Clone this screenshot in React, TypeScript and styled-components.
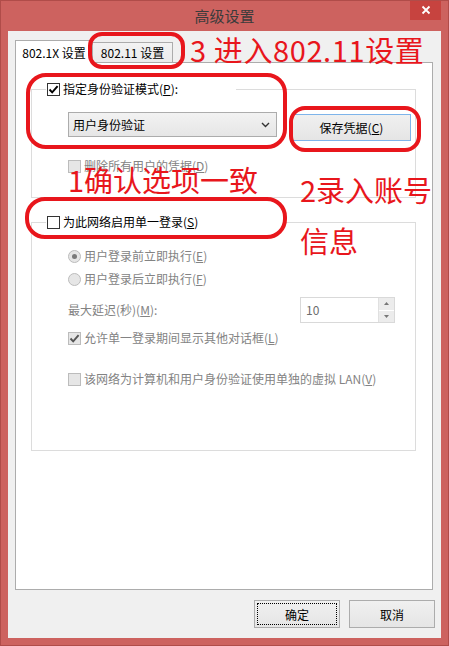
import React from 'react';
import styled, { createGlobalStyle } from 'styled-components';

const FONT = `"Noto Sans CJK SC", "Noto Sans", sans-serif`;

const Global = createGlobalStyle`
  html, body { margin: 0; padding: 0; background: #ffffff; }
  body { font-family: ${FONT}; -webkit-font-smoothing: antialiased; }
  * { box-sizing: border-box; }
`;

const Window = styled.div`
  position: relative;
  width: 449px;
  height: 646px;
  background: #cd625f;
  border: 1px solid #b04c49;
  padding: 0 7px 7px;
  display: flex;
  flex-direction: column;
  overflow: hidden;
`;

const TitleBar = styled.div`
  height: 30px;
  display: grid;
  grid-template-columns: 1fr auto 1fr;
  align-items: start;
`;

const Title = styled.div`
  grid-column: 2;
  font-family: ${FONT};
  font-size: 15px;
  line-height: 15px;
  padding-top: 7px;
  color: #3b3b3b;
`;

const CloseBtn = styled.div`
  grid-column: 3;
  justify-self: end;
  width: 31px;
  height: 20px;
  margin-top: -1px;
  background: #c7433f;
  display: flex;
  align-items: center;
  justify-content: center;
`;

const Client = styled.div`
  flex: 1;
  background: #f0f0f0;
  padding: 9px 7px 0 7px;
  display: flex;
  flex-direction: column;
`;

const TabStrip = styled.div`
  display: flex;
  align-items: flex-end;
  height: 22px;
`;

const Tab = styled.div<{ $active?: boolean; $w: number }>`
  width: ${p => p.$w}px;
  height: ${p => (p.$active ? 23 : 20)}px;
  margin-bottom: ${p => (p.$active ? -1 : 0)}px;
  position: relative;
  z-index: ${p => (p.$active ? 2 : 1)};
  background: ${p => (p.$active ? '#ffffff' : 'linear-gradient(#f3f3f3, #ebebeb)')};
  border: 1px solid #acacac;
  border-bottom: none;
  ${p => (p.$active ? '' : 'border-left: none;')}
  display: flex;
  align-items: center;
  justify-content: center;
  font-family: ${FONT};
  font-size: 12px;
  color: #000;
  white-space: nowrap;
`;

const Panel = styled.div`
  height: 528px;
  margin-right: 1px;
  background: #ffffff;
  border: 1px solid #acacac;
  display: flex;
  flex-direction: column;
`;

const Group = styled.fieldset<{ $mt: number; $pb: number }>`
  margin: ${p => p.$mt}px 16px 0 15px;
  padding: 0 0 ${p => p.$pb}px 14px;
  border: 1px solid #dcdcdc;
  min-width: 0;
`;

const Legend = styled.legend<{ $w: number }>`
  width: ${p => p.$w}px;
  padding: 0 0 0 1px;
  margin: 0;
  height: 16px;
  display: flex;
  align-items: center;
  gap: 3px;
  font-family: ${FONT};
  font-size: 12px;
  line-height: 16px;
  color: #000;
  white-space: nowrap;
`;

const Indent = styled.div`
  padding-left: 22px;
  display: flex;
  flex-direction: column;
`;

const Row = styled.div<{ $mt: number; $pr?: number }>`
  margin-top: ${p => p.$mt}px;
  padding-right: ${p => p.$pr ?? 0}px;
  display: flex;
  align-items: center;
  gap: 3px;
  min-height: 16px;
  font-family: ${FONT};
  font-size: 12px;
  line-height: 16px;
  white-space: nowrap;
`;

const TopRow = styled.div`
  margin-top: 15px;
  display: flex;
  align-items: flex-start;
`;

const Label = styled.span<{ $disabled?: boolean }>`
  color: ${p => (p.$disabled ? '#838383' : '#000')};
  font-family: ${FONT};
  font-size: 12px;
`;

const Box = styled.span<{ $disabled?: boolean }>`
  width: 13px;
  height: 13px;
  flex: none;
  border: 1px solid ${p => (p.$disabled ? '#bcbcbc' : '#333333')};
  background: ${p => (p.$disabled ? '#e6e6e6' : '#ffffff')};
  display: flex;
  align-items: center;
  justify-content: center;
`;

const Radio = styled.span`
  width: 13px;
  height: 13px;
  flex: none;
  border-radius: 50%;
  border: 1px solid #bcbcbc;
  background: #e6e6e6;
  display: flex;
  align-items: center;
  justify-content: center;
`;

const Dot = styled.span`
  width: 5px;
  height: 5px;
  border-radius: 50%;
  background: #7a7a7a;
`;

const Select = styled.div`
  width: 209px;
  height: 25px;
  flex: none;
  border: 1px solid #acacac;
  background: linear-gradient(#f2f2f2, #e6e6e6);
  display: flex;
  align-items: center;
  justify-content: space-between;
  padding: 0 6px 0 4px;
  font-family: ${FONT};
  font-size: 12px;
  color: #000;
`;

const Button = styled.div<{ $w: number; $h: number; $blue?: boolean; $focus?: boolean }>`
  width: ${p => p.$w}px;
  height: ${p => p.$h}px;
  flex: none;
  border: 1px solid ${p => (p.$blue ? '#7eb4ea' : '#acacac')};
  background: linear-gradient(#f0f0f0, #e5e5e5);
  display: flex;
  align-items: center;
  justify-content: center;
  font-family: ${FONT};
  font-size: 12px;
  color: #000;
  ${p => (p.$focus ? 'outline: 1px dotted #000; outline-offset: -4px;' : '')}
`;

const SaveButton = styled(Button)`
  margin-top: 2px;
  margin-left: 15px;
`;

const Spacer = styled.div`
  flex: 1;
`;

const Spin = styled.div`
  width: 95px;
  height: 26px;
  border: 1px solid #d9d9d9;
  background: #ffffff;
  display: flex;
  align-items: stretch;
`;

const SpinText = styled.div`
  flex: 1;
  display: flex;
  align-items: center;
  padding-left: 5px;
  font-family: ${FONT};
  font-size: 12px;
  color: #6d6d6d;
`;

const SpinBtns = styled.div`
  width: 16px;
  display: flex;
  flex-direction: column;
  border-left: 1px solid #e0e0e0;
`;

const SpinHalf = styled.div<{ $top?: boolean }>`
  flex: 1;
  background: #ececec;
  display: flex;
  align-items: center;
  justify-content: center;
  ${p => (p.$top ? 'border-bottom: 1px solid #ffffff;' : '')}
`;

const Footer = styled.div`
  margin-top: 10px;
  display: flex;
  justify-content: flex-end;
  gap: 9px;
  margin-right: -1px;
`;

/* annotation layer */
const Overlay = styled.div`
  position: absolute;
  left: -1px;
  top: -1px;
  width: 449px;
  height: 646px;
  pointer-events: none;
  z-index: 10;
`;

const Ring = styled.div<{ $x: number; $y: number; $w: number; $h: number; $r: number }>`
  position: absolute;
  left: ${p => p.$x}px;
  top: ${p => p.$y}px;
  width: ${p => p.$w}px;
  height: ${p => p.$h}px;
  border: 4px solid #e8161c;
  border-radius: ${p => p.$r}px;
`;

const Note = styled.div<{ $x: number; $y: number; $ls?: number }>`
  position: absolute;
  left: ${p => p.$x}px;
  top: ${p => p.$y}px;
  font-family: ${FONT};
  font-size: 29px;
  line-height: 32px;
  letter-spacing: ${p => p.$ls ?? 0}px;
  color: #e8161c;
  white-space: nowrap;
`;

const Check = ({ color = '#000' }: { color?: string }) => (
  <svg width="11" height="11" viewBox="0 0 11 11">
    <polyline points="1.5,5.5 4.2,8.4 9.6,2.2" fill="none" stroke={color} strokeWidth="1.9" />
  </svg>
);

const CheckBox = ({ checked, disabled }: { checked?: boolean; disabled?: boolean }) => (
  <Box $disabled={disabled}>{checked && <Check color={disabled ? '#555' : '#000'} />}</Box>
);

export default function App() {
  return (
    <>
      <Global />
      <Window>
        <TitleBar>
          <Title>高级设置</Title>
          <CloseBtn>
            <svg width="10" height="10" viewBox="0 0 10 10">
              <path d="M1.5 1.5 L8.5 8.5 M8.5 1.5 L1.5 8.5" stroke="#fff" strokeWidth="1.8" />
            </svg>
          </CloseBtn>
        </TitleBar>
        <Client>
          <TabStrip>
            <Tab $active $w={78}>802.1X 设置</Tab>
            <Tab $w={80}>802.11 设置</Tab>
          </TabStrip>
          <Panel>
            <Group $mt={18} $pb={23}>
              <Legend $w={190}>
                <CheckBox checked />
                <Label>指定身份验证模式(<u>P</u>):</Label>
              </Legend>
              <Indent>
                <TopRow>
                  <Select>
                    <span>用户身份验证</span>
                    <svg width="9" height="6" viewBox="0 0 9 6">
                      <polyline points="1,1 4.5,4.5 8,1" fill="none" stroke="#333" strokeWidth="1.4" />
                    </svg>
                  </Select>
                  <SaveButton $w={119} $h={27} $blue>
                    保存凭据(<u>C</u>)
                  </SaveButton>
                </TopRow>
                <Row $mt={17}>
                  <CheckBox disabled />
                  <Label $disabled>删除所有用户的凭据(<u>D</u>)</Label>
                </Row>
              </Indent>
            </Group>
            <Group $mt={16} $pb={63}>
              <Legend $w={237}>
                <CheckBox />
                <Label>为此网络启用单一登录(<u>S</u>)</Label>
              </Legend>
              <Indent>
                <Row $mt={18}>
                  <Radio><Dot /></Radio>
                  <Label $disabled>用户登录前立即执行(<u>E</u>)</Label>
                </Row>
                <Row $mt={7}>
                  <Radio />
                  <Label $disabled>用户登录后立即执行(<u>F</u>)</Label>
                </Row>
                <Row $mt={10} $pr={20}>
                  <Label $disabled>最大延迟(秒)(<u>M</u>):</Label>
                  <Spacer />
                  <Spin>
                    <SpinText>10</SpinText>
                    <SpinBtns>
                      <SpinHalf $top>
                        <svg width="5" height="3" viewBox="0 0 5 3"><polygon points="0,3 2.5,0 5,3" fill="#777" /></svg>
                      </SpinHalf>
                      <SpinHalf>
                        <svg width="5" height="3" viewBox="0 0 5 3"><polygon points="0,0 2.5,3 5,0" fill="#777" /></svg>
                      </SpinHalf>
                    </SpinBtns>
                  </Spin>
                </Row>
                <Row $mt={7}>
                  <CheckBox checked disabled />
                  <Label $disabled>允许单一登录期间显示其他对话框(<u>L</u>)</Label>
                </Row>
                <Row $mt={25}>
                  <CheckBox disabled />
                  <Label $disabled>该网络为计算机和用户身份验证使用单独的虚拟 LAN(<u>V</u>)</Label>
                </Row>
              </Indent>
            </Group>
          </Panel>
          <Footer>
            <Button $w={86} $h={28} $focus>确定</Button>
            <Button $w={86} $h={28}>取消</Button>
          </Footer>
        </Client>
        <Overlay>
          <Ring $x={88} $y={32} $w={97} $h={37} $r={14} />
          <Note $x={190} $y={33} $ls={0.6}>3 进入802.11设置</Note>
          <Ring $x={26} $y={73} $w={261} $h={76} $r={20} />
          <Ring $x={289} $y={106} $w={132} $h={46} $r={16} />
          <Note $x={68} $y={163}>1确认选项一致</Note>
          <Note $x={300} $y={173}>2录入账号</Note>
          <Note $x={300} $y={224}>信息</Note>
          <Ring $x={25} $y={197} $w={262} $h={42} $r={20} />
        </Overlay>
      </Window>
    </>
  );
}
